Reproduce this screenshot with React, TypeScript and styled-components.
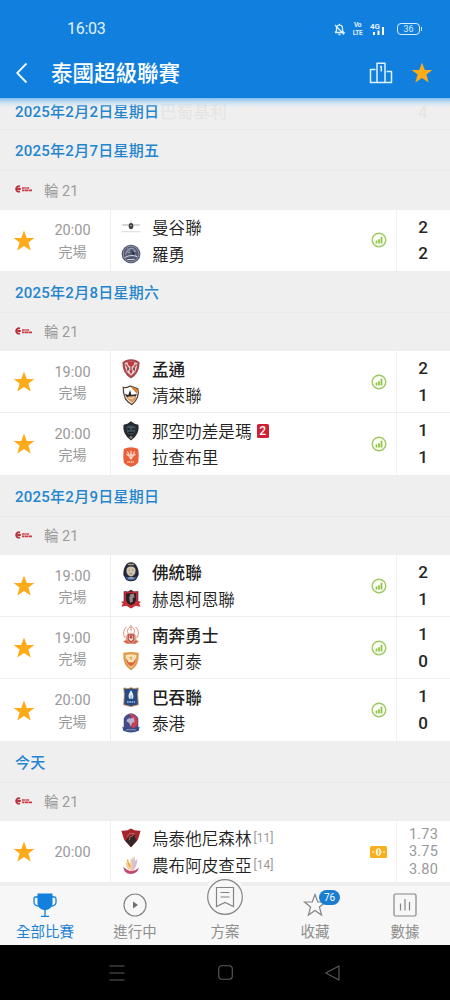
import type { ReactNode } from 'react';
import { createGlobalStyle, styled } from 'styled-components';

const GlobalStyle = createGlobalStyle`
    * {
        box-sizing: border-box;
    }
    body {
        margin: 0;
        background: #efefef;
        font-family: Roboto, "Noto Sans CJK TC", sans-serif;
    }
    svg {
        display: block;
        flex: none;
        overflow: visible;
    }
`;

const Screen = styled.div`
    width: 450px;
    height: 1000px;
    display: flex;
    flex-direction: column;
    overflow: hidden;
    background: #efefef;
`;

const Header = styled.header`
    flex: none;
    height: 98px;
    background: #107fdd;
    color: #fff;
`;

const StatusBar = styled.div`
    height: 48px;
    padding: 10px 27px 0 67px;
    display: flex;
    align-items: center;
`;

const Clock = styled.span`
    flex: 1;
    color: #e2f2ff;
    font-size: 16px;
    line-height: 20px;
    letter-spacing: -0.3px;
`;

const StatusIcons = styled.div`
    display: flex;
    align-items: center;
    gap: 7px;
`;

const StackedLabel = styled.span`
    width: 11px;
    display: flex;
    flex-direction: column;
    align-items: center;
    color: #e2f2ff;
    font-size: 6.5px;
    font-weight: 700;
    line-height: 8px;
    letter-spacing: -0.3px;
`;

const Battery = styled.span`
    position: relative;
    width: 23px;
    height: 12px;
    margin-left: 4px;
    margin-right: 3px;
    border: 1px solid #d6edff;
    border-radius: 4px;
    color: #d6edff;
    font-size: 9px;
    line-height: 10px;
    text-align: center;

    &::after {
        content: '';
        position: absolute;
        right: -3px;
        top: 3px;
        width: 1.5px;
        height: 4px;
        background: #d6edff;
    }
`;

const TitleBar = styled.div`
    height: 50px;
    padding: 0 17px 0 16px;
    display: flex;
    align-items: center;
`;

const Title = styled.h1`
    flex: 1;
    margin: 1px 0 0 24px;
    font-size: 21.5px;
    font-weight: 500;
    line-height: 30px;
`;

const TitleActions = styled.div`
    display: flex;
    align-items: center;
    gap: 18px;
`;

const List = styled.main`
    flex: none;
    position: relative;
    height: 785px;
    overflow: hidden;

    &::before {
        content: '';
        position: absolute;
        z-index: 1;
        inset: 0 0 auto;
        height: 9px;
        background: linear-gradient(#86bcec, #c6def3 45%, rgba(239, 239, 239, 0));
    }
`;

const DateRow = styled.div<{ $pinned?: boolean }>`
    position: relative;
    height: ${(p) => (p.$pinned ? '32px' : '41px')};
    padding: 0 15px ${(p) => (p.$pinned ? '7px' : '1px')};
    display: flex;
    align-items: center;
    border-bottom: 1px solid #e9e9e9;
    color: #2485cf;
    font-size: 15px;
    font-weight: 500;
    letter-spacing: 0.25px;
`;

// previous fixture, still showing through the pinned date
const Ghost = styled.span<{ $left: number }>`
    position: absolute;
    left: ${(p) => p.$left}px;
    top: 3px;
    color: #e4e4e4;
    font-size: 16.5px;
    font-weight: 400;
    line-height: 24px;
`;

const RoundRow = styled.div`
    height: 38.5px;
    padding: 0 15px 2px;
    display: flex;
    align-items: center;
    gap: 11px;
    color: #9b9b9b;
    font-size: 14.5px;
`;

const MatchRow = styled.div`
    height: 62.2px;
    display: flex;
    background: #fff;
    border-bottom: 1px solid #eee;
`;

const StarCell = styled.div`
    width: 48px;
    display: flex;
    align-items: center;
    justify-content: center;
    padding-top: 1px;
`;

const TimeCell = styled.div`
    width: 63px;
    padding: 3px 13px 0 0;
    display: flex;
    flex-direction: column;
    align-items: center;
    justify-content: center;
    border-right: 1px solid #eee;
    color: #999;
    font-size: 14.5px;
    line-height: 20.5px;
`;

const TimeNote = styled.span`
    font-size: 14px;
`;

const Teams = styled.div`
    flex: 1;
    padding: 4px 0 0 10px;
`;

const Team = styled.div<{ $winner?: boolean }>`
    height: 26.7px;
    display: flex;
    align-items: center;
    color: #222;
    font-size: 16.6px;
    font-weight: ${(p) => (p.$winner ? 500 : 350)};
    white-space: nowrap;

    svg {
        margin-right: 11px;
    }
`;

const RedCards = styled.span`
    width: 12px;
    height: 14px;
    margin-left: 5px;
    border-radius: 1.5px;
    background: #d01f35;
    color: #fff;
    font-size: 12px;
    font-weight: 500;
    line-height: 14.5px;
    text-align: center;
`;

const Rank = styled.span`
    margin-left: 2px;
    color: #999;
    font-size: 12px;
    font-weight: 400;
`;

const InfoCell = styled.div`
    width: 36px;
    display: flex;
    align-items: center;
    justify-content: center;
    border-right: 1px solid #f1f1f1;
`;

const ScoreCell = styled.div`
    width: 53px;
    padding: 4px 1px 0 0;
    color: #262626;
    font-size: 17px;
    font-weight: 500;
    line-height: 26.7px;
    text-align: center;
`;

const OddsCell = styled.div`
    width: 53px;
    padding: 5px 0 0;
    color: #999;
    font-size: 14.5px;
    line-height: 17.2px;
    letter-spacing: 0.2px;
    text-align: center;
`;

const TabBar = styled.nav`
    flex: none;
    position: relative;
    height: 62px;
    display: flex;
    background: #f7f7f7;
    border-top: 3px solid #eeeeee;
`;

const Tab = styled.div<{ $active?: boolean }>`
    position: relative;
    flex: 1;
    display: flex;
    flex-direction: column;
    align-items: center;
    color: ${(p) => (p.$active ? '#1b81d5' : '#8e8e8e')};
    font-size: 14.5px;
    line-height: 20px;
`;

const TabIcon = styled.div<{ $raised?: boolean }>`
    width: ${(p) => (p.$raised ? '42px' : '26px')};
    height: ${(p) => (p.$raised ? '42px' : '26px')};
    margin-top: ${(p) => (p.$raised ? '-10px' : '6px')};
    margin-bottom: 5px;
    display: flex;
    align-items: center;
    justify-content: center;
    border-radius: 50%;
    background: #f7f7f7;
`;

const Badge = styled.span`
    position: absolute;
    left: 49px;
    top: 4px;
    width: 21px;
    height: 15px;
    border-radius: 8px;
    background: #1b7dd0;
    color: #fff;
    font-size: 10px;
    line-height: 15px;
    text-align: center;
`;

const SystemBar = styled.div`
    flex: none;
    height: 55px;
    padding: 0 109px;
    display: flex;
    align-items: center;
    justify-content: space-between;
    background: #000;
`;

const StarIcon = ({ size = 22 }: { size?: number }) => (
    <svg width={size} height={size} viewBox="0 0 22 22">
        <path d="M11 .6 13.8 7.9H21.4L15.4 12.5 17.7 20.4 11 15.9 4.3 20.4 6.6 12.5.6 7.9H8.2Z" fill="#fdab19" />
    </svg>
);

const LeagueLogo = () => (
    <svg width="18" height="8" viewBox="0 0 18 8">
        <path d="M5 1.6C3 .6 1.2 2 1.2 4s1.8 3.2 3.8 2.3M2.4 4h3.4" fill="none" stroke="#b7303b" strokeWidth="1.9" />
        <path d="M7 3h2.8M10.2 3h1.5M12.1 3h2M7 5.4h2.6M10 5.4h3.2M13.6 5.4h3.4" stroke="#cb3a45" strokeWidth="1.7" />
    </svg>
);

const StatsIcon = () => (
    <svg width="16" height="16" viewBox="0 0 16 16">
        <circle cx="8" cy="8" r="6.8" fill="#fbfff4" stroke="#a0c765" strokeWidth="1.4" />
        <path d="M5.5 11.5V8.4M8 11.5V7.2M10.5 11.5V4.8" stroke="#86c440" strokeWidth="1.7" />
    </svg>
);

const CashIcon = () => (
    <svg width="17" height="12" viewBox="0 0 17 12">
        <rect width="17" height="12" rx="1.5" fill="#f6b020" />
        <ellipse cx="8.5" cy="6" rx="2.8" ry="3.7" fill="#fff4d2" />
        <path d="M8.5 3.4V8.6M7.6 5h1.8M7.6 7h1.8" stroke="#f0b030" strokeWidth=".9" />
        <path d="M3 5v2M14 5v2" stroke="#fff0c4" strokeWidth="1.2" />
    </svg>
);

const crests: Record<string, ReactNode> = {
    bangkok: (
        <>
            <path d="M.5 8.8h21M.5 16.2h21" stroke="#c4c4c4" strokeWidth=".7" />
            <path d="M2 8.8h18" stroke="#888" strokeWidth=".7" strokeDasharray="1.5 .6" />
            <path d="M11 4v4" stroke="#aaa" strokeWidth=".7" />
            <ellipse cx="11" cy="10" rx="2.6" ry="3.4" fill="#3f424a" />
            <path d="M10 9.5h2" stroke="#c9b583" />
        </>
    ),
    rayong: (
        <>
            <circle cx="11" cy="11" r="10.3" fill="#555970" />
            <circle cx="11" cy="11" r="8.6" fill="none" stroke="#9da2b6" strokeWidth=".8" />
            <path d="M5 12c1-5 4-8 8-7l3 3-3 1 3 3-4 1M6 8l4 2M7 5l3 3" fill="none" stroke="#989eb5" strokeWidth="1.2" />
            <path d="M4 15c5-3 9-3 14-1M7 17h8" fill="none" stroke="#cfd2de" strokeWidth="1.2" />
            <path d="M12 8l3 4" stroke="#2e3248" strokeWidth="2" />
        </>
    ),
    muangthong: (
        <>
            <path d="M1.5 3.5 5 1.5Q11-.8 17 1.5L20.5 3.5Q20.5 16 11 21.5 1.5 16 1.5 3.5Z" fill="#a9484c" />
            <path d="M4 4.5Q11 1 18 4.5 18 14 11 18.5 4 14 4 4.5Z" fill="#e6cfcb" />
            <path d="M7 3.5q4-1.5 8 0l-1.5 4-2.5 1-2.5-1ZM9 12.5h4l-2 4.5Z" fill="#bd3b40" />
            <path d="M5 6l3 4-1 3M17 6l-3 4 1 3M11 8v5" fill="none" stroke="#b0444a" strokeWidth="1.5" />
            <path d="M7 10.5l2 .8M15 10.5l-2 .8" stroke="#43414a" strokeWidth="1.2" />
        </>
    ),
    chiangrai: (
        <>
            <path d="M2.5 2.5Q7 3.5 10 1l8.5 3Q21 14 12 21.5 2 17 2.5 2.5Z" fill="#fff" stroke="#5a4434" strokeWidth="1.4" />
            <path d="M10.5 2l7.5 2.5-.5 5Z" fill="#e07a25" />
            <path d="M4 9.5l4 1.5 2-5.5 1.500 5.5 6-1-2 4.500H7Z" fill="#29282a" />
            <path d="M6 13.5q5-2 11-1-1 5-5 7-4-2-6-6Z" fill="#d8985f" />
            <path d="M8 14l4 1 3-2" fill="none" stroke="#fff2df" />
        </>
    ),
    nakhon: (
        <>
            <path d="M2.8 4 7 3 11 .3l4 2.7L19.2 4Q21 14 11 21.5 1 14 2.8 4Z" fill="#252b31" />
            <path d="M6 6.5q5-3 10 0l-1 6.5q-4 3-8 0Z" fill="#435561" />
            <path d="M7 8.5l3 1M15 8.5l-3 1M8 12.5h6" stroke="#14191e" strokeWidth="1.5" />
            <path d="M9 17.5q2-1.5 4 0l-2 2.5Z" fill="#9c8873" />
        </>
    ),
    ratchaburi: (
        <>
            <path d="M3 2.2Q11-1.5 19 2.2 20 10 19 17q-3 4-8 5Q6 21 3 17 2 10 3 2.2Z" fill="#e8603a" />
            <path d="M7 5l2 4h4l2-4M11 4v8M8 9l3 4 3-4M6 8l3 2M16 8l-3 2" fill="none" stroke="#fbd8c6" strokeWidth="1.4" />
            <path d="M7 16.5h8" stroke="#ffd0b6" strokeWidth="1.8" strokeDasharray="1.4 .6" />
        </>
    ),
    police: (
        <>
            <path d="M7 1.5q4-2.6 8 0 4.5 4 4.5 12.5l-3 5.5q-5.5 3.5-11 0l-3-5.5Q2.500 5.500 7 1.500Z" fill="#23263c" />
            <path d="M8 3.5h6l1-1.5H7Z" fill="#a89c70" />
            <path d="M6 9q0-4 5-4t5 4q0 6-5 7-5-1-5-7Z" fill="#cfc4ab" />
            <path d="M8.5 9h1M12.5 9h1M9.5 13h3" stroke="#77716b" />
            <path d="M5 16q6 4 12 0l-1 2.5q-5 3-10 0Z" fill="#466aa3" />
            <path d="M8 17.5h6" stroke="#e6eef6" />
        </>
    ),
    khonkaen: (
        <>
            <path d="M3 2.5l4.5.5L11 .8 14.5 3l4.5-.5V16l-8 5-8-5Z" fill="#2b2024" />
            <path d="M4.5 3.8h13V15L11 20l-6.5-5Z" fill="none" stroke="#bd2c37" strokeWidth="2" />
            <path d="M10 6l4-1 1 4-2 1v4l-3 1-1-5Z" fill="#8f8889" />
            <path d="M0 14l6-1 1 3 4 2 4-2 1-3 6 1-2 2 1.5 3.5-5.5-1-5 3-5-3-5.5 1L2 16Z" fill="#c82f38" />
        </>
    ),
    nongbua: (
        <>
            <path d="M4 14Q1 7 6 2M18 14q3-7-2-12M8 10q-2-5 1-7M14 10q2-5-1-7M11 0v7M9 2.5h4" fill="none" stroke="#dc9480" strokeWidth="1.1" />
            <path d="M5 12q6-7 12 0v6q-6 4-12 0Z" fill="#e3ac97" />
            <path d="M8 11h6v5l-3 3-3-3Z" fill="#f8e7dc" stroke="#ba4e45" strokeWidth="1.4" />
            <path d="M2.5 18q4-3 6.5 1 2 2 4 0 3-4 6.5-1l-3.5 2.5H6Z" fill="#d76854" />
            <circle cx="11" cy="13.5" r="1.6" fill="#b84843" />
        </>
    ),
    sukhothai: (
        <>
            <path d="M2.5 2Q11 0 19.5 2q1 14-8.5 19.5Q1.5 16 2.5 2Z" fill="#dfa047" />
            <path d="M4.5 3.8q6-1.3 13 0Q18 14 11 19 4 14 4.5 3.8Z" fill="#f9e3b7" stroke="#d98847" strokeWidth=".8" />
            <path d="M5.5 8q0 6 5.5 9 5.5-3 5.5-9l-3 4.5h-5Z" fill="#d9653a" />
            <path d="M9.5 7.5h3M11 6v4" stroke="#dda34c" strokeWidth="1.2" />
        </>
    ),
    bgpathum: (
        <>
            <path d="M3 1l4.5.8L11 .8l3.5 1L19 1l-.7 7L19 19.5l-8 2-8-2 .7-11.5Z" fill="#244b86" stroke="#d0854a" strokeWidth=".9" />
            <path d="M11 3.5q4 6 2 9.5h-4Q7 8.500 11 3.500Z" fill="#e5eff7" />
            <path d="M11 9v4" stroke="#5f87b8" />
            <path d="M6.5 16.5h9" stroke="#9fb7d8" strokeWidth="1.5" strokeDasharray="2 .6" />
        </>
    ),
    port: (
        <>
            <path d="M3 6Q6 .5 11 .5q5 0 8 5.5v10q-4 5-8 5-5-1-8-5Z" fill="#454d88" />
            <path d="M11 2q8 0 7.5 10L14 17l-4-3Z" fill="#ca3e51" />
            <path d="M6 9q1-4 5-3l3-1 1 5-3 1-1 4-2-4Z" fill="#b7b3d0" />
            <path d="M1.5 15l3 1q6.5 3 13 0l3-1-1 4.5q-8.5 4-17 0Z" fill="#394b86" />
            <path d="M6 18.5h10" stroke="#bcc6e0" strokeDasharray="1.5 .6" />
            <path d="M9 1.5h4" stroke="#bd5262" strokeWidth="1.5" />
        </>
    ),
    uthai: (
        <>
            <path d="M.5 3Q7 3.5 11 .5q4 3 10.5 2.5Q20 9 18.5 13L11 21.5 3.5 13Q2 9 .5 3Z" fill="#a6262e" />
            <path d="M4.5 14l3-3 2.5-3 6-1-1 3 2.5 4L11 21Z" fill="#33262a" />
            <path d="M7 9.5q2-5 8-3l-2 2-3 1-1 4" fill="none" stroke="#c9665d" strokeWidth="1.1" />
        </>
    ),
    nongbuaPitchaya: (
        <>
            <path d="M2.5 13q1 8.5 9 8 7-1 8-7-4.5 4.5-10 3.5-4-1-7-4.5Z" fill="#c04676" />
            <path d="M5 4q0 6 5 5 0-4 3-7-1 5 1 8l2-4q1 8-4 12-7-1-7-14Z" fill="#f3cf9c" />
            <path d="M11 16q3-4 1-9l3-6 .5 6L18 4q0 8-4 12Z" fill="#d6bfd4" />
            <path d="M7 5q1 5 3 8" fill="none" stroke="#eba63f" strokeWidth="1.5" />
        </>
    ),
};

const Crest = ({ id }: { id: string }) => (
    <svg width="20" height="20" viewBox="0 0 22 22">{crests[id]}</svg>
);

type Side = { name: string; crest: string; winner?: boolean; red?: number; rank?: number };
type Match = { time: string; finished: boolean; teams: Side[]; scores?: number[]; odds?: string[] };

const days: { date: string; matches: Match[] }[] = [
    {
        date: '2025年2月7日星期五',
        matches: [
            { time: '20:00', finished: true, scores: [2, 2], teams: [{ name: '曼谷聯', crest: 'bangkok' }, { name: '羅勇', crest: 'rayong' }] },
        ],
    },
    {
        date: '2025年2月8日星期六',
        matches: [
            { time: '19:00', finished: true, scores: [2, 1], teams: [{ name: '孟通', crest: 'muangthong', winner: true }, { name: '清萊聯', crest: 'chiangrai' }] },
            { time: '20:00', finished: true, scores: [1, 1], teams: [{ name: '那空叻差是瑪', crest: 'nakhon', red: 2 }, { name: '拉查布里', crest: 'ratchaburi' }] },
        ],
    },
    {
        date: '2025年2月9日星期日',
        matches: [
            { time: '19:00', finished: true, scores: [2, 1], teams: [{ name: '佛統聯', crest: 'police', winner: true }, { name: '赫恩柯恩聯', crest: 'khonkaen' }] },
            { time: '19:00', finished: true, scores: [1, 0], teams: [{ name: '南奔勇士', crest: 'nongbua', winner: true }, { name: '素可泰', crest: 'sukhothai' }] },
            { time: '20:00', finished: true, scores: [1, 0], teams: [{ name: '巴吞聯', crest: 'bgpathum', winner: true }, { name: '泰港', crest: 'port' }] },
        ],
    },
    {
        date: '今天',
        matches: [
            { time: '20:00', finished: false, odds: ['1.73', '3.75', '3.80'], teams: [{ name: '烏泰他尼森林', crest: 'uthai', rank: 11 }, { name: '農布阿皮查亞', crest: 'nongbuaPitchaya', rank: 14 }] },
        ],
    },
];

const MatchItem = ({ match }: { match: Match }) => (
    <MatchRow>
        <StarCell><StarIcon /></StarCell>
        <TimeCell>
            <span>{match.time}</span>
            {match.finished && <TimeNote>完場</TimeNote>}
        </TimeCell>
        <Teams>
            {match.teams.map((team) => (
                <Team key={team.name} $winner={team.winner}>
                    <Crest id={team.crest} />
                    {team.name}
                    {team.red && <RedCards>{team.red}</RedCards>}
                    {team.rank && <Rank>[{team.rank}]</Rank>}
                </Team>
            ))}
        </Teams>
        <InfoCell>{match.odds ? <CashIcon /> : <StatsIcon />}</InfoCell>
        {match.scores && <ScoreCell>{match.scores.map((s, i) => <div key={i}>{s}</div>)}</ScoreCell>}
        {match.odds && <OddsCell>{match.odds.map((o) => <div key={o}>{o}</div>)}</OddsCell>}
    </MatchRow>
);

const App = () => {
    return (
        <Screen>
            <GlobalStyle />
            <Header>
                <StatusBar>
                    <Clock>16:03</Clock>
                    <StatusIcons>
                        <svg width="11" height="13" viewBox="0 0 11 13" fill="none" stroke="#d9efff" strokeWidth="1.3">
                            <path d="M5.5 .8v1.4M1 9.5h9L8.5 8V5Q8.5 2.2 5.5 2.2T2.5 5v3L1 9.5M4.5 11.5h2M1 2l9 9.5" />
                        </svg>
                        <StackedLabel><span>Vo</span><span>LTE</span></StackedLabel>
                        <svg width="16" height="14" viewBox="0 0 16 14">
                            <text x="0" y="6.5" fontSize="8" fontWeight="700" fill="#e2f2ff">4G</text>
                            <path d="M4 13v-3M8.5 13V8.5M13 13V5" stroke="#fff" strokeWidth="2" />
                        </svg>
                        <Battery>36</Battery>
                    </StatusIcons>
                </StatusBar>
                <TitleBar>
                    <svg width="11" height="20" viewBox="0 0 11 20" fill="none" stroke="#f2f9ff" strokeWidth="1.8">
                        <path d="M10.5 .5 1.2 10 10.5 19.5" />
                    </svg>
                    <Title>泰國超級聯賽</Title>
                    <TitleActions>
                        <svg width="24" height="22" viewBox="0 0 24 22" fill="none" stroke="#dff2ff" strokeWidth="1.5">
                            <path d="M8 20.5V1.2h8v19.3M6.5 7.5h-5v13h21v-11H17.5M11 4.5h1.3v5" strokeLinejoin="round" />
                        </svg>
                        <StarIcon />
                    </TitleActions>
                </TitleBar>
            </Header>
            <List>
                <DateRow $pinned>
                    <Ghost $left={160}>巴蜀基利</Ghost>
                    <Ghost $left={418}>4</Ghost>
                    <span>2025年2月2日星期日</span>
                </DateRow>
                {days.map((day) => (
                    <div key={day.date}>
                        <DateRow>{day.date}</DateRow>
                        <RoundRow><LeagueLogo />輪 21</RoundRow>
                        {day.matches.map((match, i) => <MatchItem key={i} match={match} />)}
                    </div>
                ))}
            </List>
            <TabBar>
                <Tab $active>
                    <TabIcon>
                        <svg width="24" height="24" viewBox="0 0 24 24" fill="none" stroke="#1280dc" strokeWidth="1.3">
                            <path d="M4.5 .5h15v10q-.5 6-7.5 6.8-7-.8-7.5-6.8Z" fill="#1280dc" stroke="none" />
                            <path d="M5 4H2.5Q1 4 1 6v3q0 3.8 4.5 4M19 4h2.5Q23 4 23 6v3q0 3.8-4.5 4M12 17v6M8 23.3h8" />
                        </svg>
                    </TabIcon>
                    全部比賽
                </Tab>
                <Tab>
                    <TabIcon>
                        <svg width="24" height="24" viewBox="0 0 24 24">
                            <circle cx="12" cy="12" r="11" fill="none" stroke="#858585" strokeWidth="1.2" />
                            <path d="M10 8.5 15 12 10 15.5Z" fill="#707070" />
                        </svg>
                    </TabIcon>
                    進行中
                </Tab>
                <Tab>
                    <TabIcon $raised>
                        <svg width="36" height="36" viewBox="0 0 36 36" fill="none" stroke="#858585" strokeWidth="1.2">
                            <circle cx="18" cy="18" r="17.3" />
                            <path d="M9.5 8.5h17v19L18 23.5l-8.5 4ZM13.5 13.5h9M13.5 18h9" />
                        </svg>
                    </TabIcon>
                    方案
                </Tab>
                <Tab>
                    <TabIcon>
                        <svg width="24" height="24" viewBox="0 0 24 24" fill="none" stroke="#858585" strokeWidth="1.2">
                            <path d="M12 1.5 14.8 9H22.5L16.4 14 18.6 22 12 17.4 5.4 22 7.6 14 1.5 9H9.2Z" />
                        </svg>
                    </TabIcon>
                    收藏
                    <Badge>76</Badge>
                </Tab>
                <Tab>
                    <TabIcon>
                        <svg width="24" height="24" viewBox="0 0 24 24" fill="none" stroke="#858585" strokeWidth="1.2">
                            <rect x="1" y="1" width="22" height="22" rx="1.5" />
                            <path d="M7.5 17.5v-7M12 17.5V6M16.5 17.5V9" />
                        </svg>
                    </TabIcon>
                    數據
                </Tab>
            </TabBar>
            <SystemBar>
                <svg width="16" height="16" viewBox="0 0 16 16" fill="none" stroke="#5c5c5c" strokeWidth="1.1">
                    <path d="M.5 1h15M.5 8h15M.5 15h15" />
                </svg>
                <svg width="15" height="15" viewBox="0 0 15 15" fill="none" stroke="#5c5c5c" strokeWidth="1.1">
                    <rect x=".7" y=".7" width="13.6" height="13.6" rx="3" />
                </svg>
                <svg width="16" height="16" viewBox="0 0 16 16" fill="none" stroke="#5c5c5c" strokeWidth="1.1">
                    <path d="M14 1v14L.8 8Z" strokeLinejoin="round" />
                </svg>
            </SystemBar>
        </Screen>
    );
};

export default App;
